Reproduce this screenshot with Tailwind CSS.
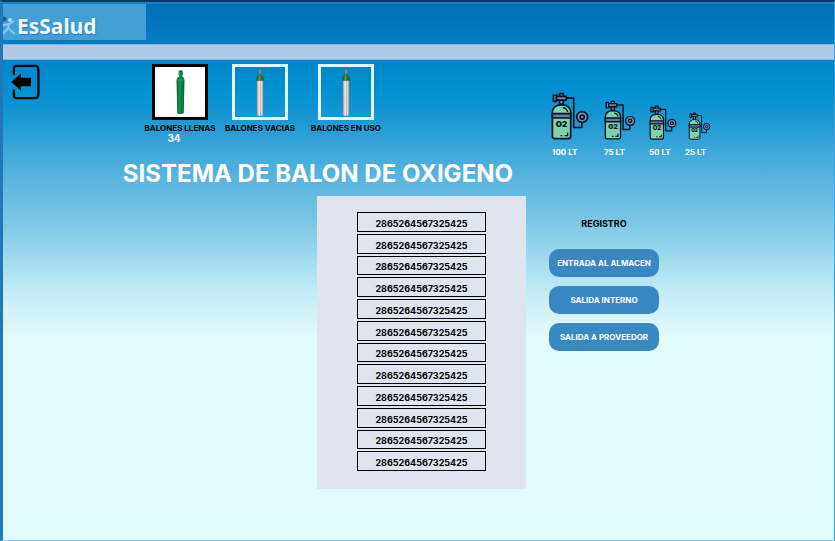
<!DOCTYPE html>
<html lang="es">
<head>
<meta charset="utf-8">
<meta name="viewport" content="width=device-width, initial-scale=1">
<title>Sistema de balon de oxigeno</title>
<script src="https://cdn.jsdelivr.net/npm/@tailwindcss/browser@4"></script>
</head>
<body class="flex min-h-screen flex-col border-t-2 border-r border-b border-l-3 border-t-[#073a66] border-r-[#3a9fdb] border-b-[#7fcdf3] border-l-[#2277b8] bg-[linear-gradient(180deg,#006fb5_0px,#0078bd_30px,#0086c8_62px,#0090d0_90px,#1b99d3_120px,#3da6d9_150px,#5bb5e0_180px,#70c1e5_210px,#8ed2ea_242px,#b0e4f2_275px,#ccf0f7_302px,#e1fafb_335px)] font-['Inter',sans-serif] text-black">

<svg class="absolute size-0 overflow-visible" aria-hidden="true">
  <defs>
    <linearGradient id="steel" x1="0" x2="1" y1="0" y2="0">
      <stop offset="0" stop-color="#8a7f7a"/><stop offset=".2" stop-color="#c9c4c2"/><stop offset=".4" stop-color="#f3f1f0"/><stop offset=".55" stop-color="#bdb6b3"/><stop offset=".75" stop-color="#e2dfdd"/><stop offset="1" stop-color="#8d7d77"/>
    </linearGradient>
    <linearGradient id="green" x1="0" x2="1" y1="0" y2="0">
      <stop offset="0" stop-color="#05602f"/><stop offset=".35" stop-color="#12934f"/><stop offset="1" stop-color="#056533"/>
    </linearGradient>
  </defs>
  <symbol id="steel-bottle" viewBox="0 0 24 150">
    <path d="M9 3h6v3h4v3h-4v14H9V9l-2-1z" fill="#55707a"/>
    <path d="M10 8h4v14h-4z" fill="#8f9f9f"/>
    <path d="M8 20h8v4c5 3 8 7 8 14v4H0v-4c0-7 3-11 8-14z" fill="#256b2f"/>
    <path d="M10 22h3v18H7c0-9 3-12 3-18z" fill="#589a51"/>
    <path d="M2 41h20v102q0 4-3 4H5q-3 0-3-4z" fill="url(#steel)"/>
    <path d="M3 143q9 5 18 0v3H4z" fill="#80726c"/>
  </symbol>
  <symbol id="green-bottle" viewBox="0 0 26 136">
    <path d="M7 4l4-3h6l3 3v11l-2 2v4H9v-4l-2-2z" fill="#087a40"/>
    <path d="M9 5h4v9H9z" fill="#3b9b69"/>
    <path d="M9 20h9q7 3 7 10l-2 98q-1 5-5 5H8q-4 0-5-5L1 30q0-7 8-10z" fill="url(#green)"/>
    <path d="M3 30h20" stroke="#49a675" stroke-width="2"/>
  </symbol>
  <symbol id="tank" viewBox="34 22 112 142">
    <path d="M38 95V83c0-14 10-23 27-23s27 9 27 23v69q0 8-8 8H46q-8 0-8-8z" fill="#7fd2ae" stroke="#06141f" stroke-width="5"/>
    <path d="M38 86h54v13H38z" fill="#6678b4" stroke="#06141f" stroke-width="5"/>
    <path d="M59 27h11v31H59z" fill="#8290bd" stroke="#06141f" stroke-width="5"/>
    <path d="M50 35h29v11H50zM41 31h9v19h-9z" fill="#6f83b5" stroke="#06141f" stroke-width="5" stroke-linejoin="round"/>
    <path d="M79 40h22v87h24v-16" fill="none" stroke="#06141f" stroke-width="5" stroke-linejoin="round"/>
    <circle cx="126" cy="96" r="16" fill="#7b8bc5" stroke="#06141f" stroke-width="5"/>
    <circle cx="126" cy="96" r="6" fill="#7b8bc5" stroke="#06141f" stroke-width="5"/>
    <path d="M69 68q12 2 14 13M83 142v9h-9M67 151h-5" fill="none" stroke="#06141f" stroke-width="4"/>
    <text x="65" y="125" text-anchor="middle" font-family="Inter, sans-serif" font-weight="900" font-size="24" fill="#06141f">O2</text>
  </symbol>
</svg>

<header>
  <div class="h-[42px] border-t-2 border-[#1780c5]">
    <div class="flex h-9 w-[143px] items-center bg-[#459fd7]">
      <svg class="mt-2 h-5 w-3" viewBox="0 0 12 20" aria-hidden="true">
        <circle cx="1" cy="3" r="2.5" fill="#1262ad"/>
        <circle cx="7" cy="4" r="2" fill="#a8dcf5"/>
        <path d="M0 9l6-1 5-3M5 8l1 5 6 5M5 12l-5 6" fill="none" stroke="#8fcbed" stroke-width="2"/>
      </svg>
      <span class="pl-[2px] pt-2 font-['Noto_Sans',sans-serif] text-[21px] leading-6 font-bold text-[#eafaff] [text-shadow:1px_1px_1px_#2c79b3]">EsSalud</span>
    </div>
  </div>
  <div class="h-4 border-y border-[#86b5df] bg-[#b1c8e6]"></div>
</header>

<main class="grid flex-1 grid-cols-[523fr_308fr] pt-1">
  <section class="flex flex-col">
    <div class="flex items-start">
      <button type="button" aria-label="Salir" class="ml-2 h-9 w-[30px]">
        <svg class="h-9 w-[29px]" viewBox="0 0 90 108" aria-hidden="true">
          <path d="M9 32V13q0-9 9-9h56q11 0 11 11v78q0 11-11 11H18q-9 0-9-9V77" fill="none" stroke="#000" stroke-width="7"/>
          <path d="M1 54l30-26v13h31v26H31v14z"/>
        </svg>
      </button>
      <div class="ml-[99px] flex text-center text-[8px] leading-2 font-bold whitespace-nowrap">
        <figure class="flex w-20 flex-col items-center">
          <div class="flex size-14 items-center justify-center border-3 border-black bg-white"><svg class="h-[45px] w-[9px]"><use href="#green-bottle"/></svg></div>
          <figcaption class="pt-1"><span class="block">BALONES LLENAS</span><span class="block pr-3 text-[10px] leading-3 text-white">34</span></figcaption>
        </figure>
        <figure class="flex w-20 flex-col items-center">
          <div class="flex size-14 items-center justify-center border-3 border-[#e1fafb]"><svg class="h-[50px] w-2"><use href="#steel-bottle"/></svg></div>
          <figcaption class="pt-1">BALONES VACIAS</figcaption>
        </figure>
        <figure class="ml-[6px] flex w-20 flex-col items-center">
          <div class="flex size-14 items-center justify-center border-3 border-[#e1fafb]"><svg class="h-[50px] w-2"><use href="#steel-bottle"/></svg></div>
          <figcaption class="pt-1">BALONES EN USO</figcaption>
        </figure>
      </div>
    </div>
    <h1 class="mt-[14px] pr-[13px] text-right text-[24px] leading-8 font-bold whitespace-nowrap text-white">SISTEMA DE BALON DE OXIGENO</h1>
    <ul class="mt-[6px] mb-4 grid h-[293px] w-[209px] gap-[2px] self-end bg-[#dfe5ee] px-10 pt-4 pb-[18px] text-center text-[9px] leading-3 font-bold">
      <li class="flex items-end justify-center border border-black pb-px">2865264567325425</li>
      <li class="flex items-end justify-center border border-black pb-px">2865264567325425</li>
      <li class="flex items-end justify-center border border-black pb-px">2865264567325425</li>
      <li class="flex items-end justify-center border border-black pb-px">2865264567325425</li>
      <li class="flex items-end justify-center border border-black pb-px">2865264567325425</li>
      <li class="flex items-end justify-center border border-black pb-px">2865264567325425</li>
      <li class="flex items-end justify-center border border-black pb-px">2865264567325425</li>
      <li class="flex items-end justify-center border border-black pb-px">2865264567325425</li>
      <li class="flex items-end justify-center border border-black pb-px">2865264567325425</li>
      <li class="flex items-end justify-center border border-black pb-px">2865264567325425</li>
      <li class="flex items-end justify-center border border-black pb-px">2865264567325425</li>
      <li class="flex items-end justify-center border border-black pb-px">2865264567325425</li>
    </ul>
  </section>

  <aside class="pt-7 pl-[23px] text-[8px] leading-[10px] font-bold whitespace-nowrap text-white">
    <div class="flex items-end pl-[2px]">
      <figure class="w-[53px]"><svg class="h-12 w-[38px]"><use href="#tank"/></svg><figcaption class="pt-[7px] pl-px">100 LT</figcaption></figure>
      <figure class="w-[45px]"><svg class="h-10 w-8"><use href="#tank"/></svg><figcaption class="pt-[7px]">75 LT</figcaption></figure>
      <figure class="w-9"><svg class="h-[35px] w-7"><use href="#tank"/></svg><figcaption class="pt-[7px]">50 LT</figcaption></figure>
      <figure><svg class="ml-[3px] h-7 w-[23px]"><use href="#tank"/></svg><figcaption class="pt-[7px]">25 LT</figcaption></figure>
    </div>
    <div class="mt-[61px] flex w-[110px] flex-col">
      <h2 class="pb-[19px] text-center text-[9px] leading-3 font-bold text-black">REGISTRO</h2>
      <div class="flex flex-col gap-[9px]">
        <button type="button" class="h-7 rounded-[10px] bg-[#3a88c2] pb-px">ENTRADA AL ALMACEN</button>
        <button type="button" class="h-7 rounded-[10px] bg-[#3a88c2] pb-px">SALIDA INTERNO</button>
        <button type="button" class="h-7 rounded-[10px] bg-[#3a88c2] pb-px">SALIDA A PROVEEDOR</button>
      </div>
    </div>
  </aside>
</main>
</body>
</html>
